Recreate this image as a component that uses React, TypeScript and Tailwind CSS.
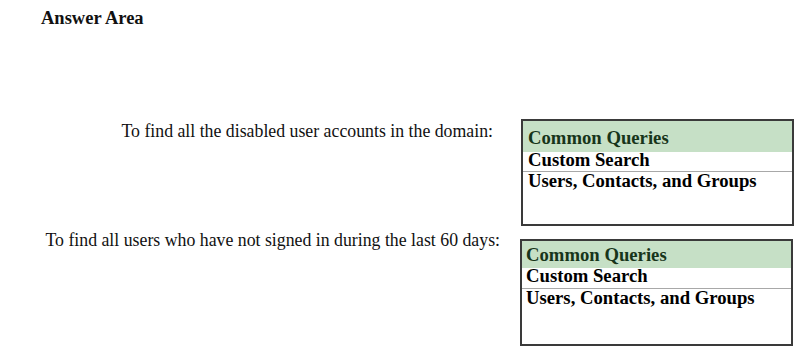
const options = ['Common Queries', 'Custom Search', 'Users, Contacts, and Groups'];

interface AnswerBoxProps {
    variant: 'first' | 'second';
}

function AnswerBox({ variant }: AnswerBoxProps) {
    const first = variant === 'first';
    return (
        <div
            className={`w-[273px] h-[107px] border-2 border-[#3a3a3a] flex flex-col font-bold text-[18.7px] text-black ${
                first ? '' : 'mt-[7px]'
            }`}
        >
            <div
                className={`bg-[#c6e0c6] text-[#17351a] ${
                    first ? 'h-[31px] pt-[8px] leading-none pl-[5px]' : 'h-[27px] leading-[27px] pl-[4px]'
                }`}
            >
                {options[0]}
            </div>
            <div
                className={`border-b border-[#a8a8a8] ${
                    first ? 'h-[20px] leading-[16px] pl-[5px]' : 'h-[21px] leading-[15px] pl-[4px]'
                }`}
            >
                {options[1]}
            </div>
            <div className={`flex-1 leading-[17px] ${first ? 'pl-[5px]' : 'pl-[4px]'}`}>
                {options[2]}
            </div>
        </div>
    );
}

export default function App() {
    return (
        <div
            className="w-[800px] h-[357px] bg-white text-[#111] overflow-hidden"
            style={{ fontFamily: '"Liberation Serif", "Times New Roman", serif' }}
        >
            <div className="pl-[41px] pt-[9px] font-bold text-[18.5px] leading-none">Answer Area</div>

            {/* first question */}
            <div className="flex items-start mt-[91px]">
                <div className="w-[521px] text-right pr-[28px] pt-[4px] text-[17.8px] leading-none">
                    To find all the disabled user accounts in the domain:
                </div>
                <AnswerBox variant="first" />
            </div>

            {/* second question */}
            <div className="flex items-start mt-[6px]">
                <div className="w-[520px] text-right pr-[20px] text-[17.8px] leading-none">
                    To find all users who have not signed in during the last 60 days:
                </div>
                <AnswerBox variant="second" />
            </div>
        </div>
    );
}
